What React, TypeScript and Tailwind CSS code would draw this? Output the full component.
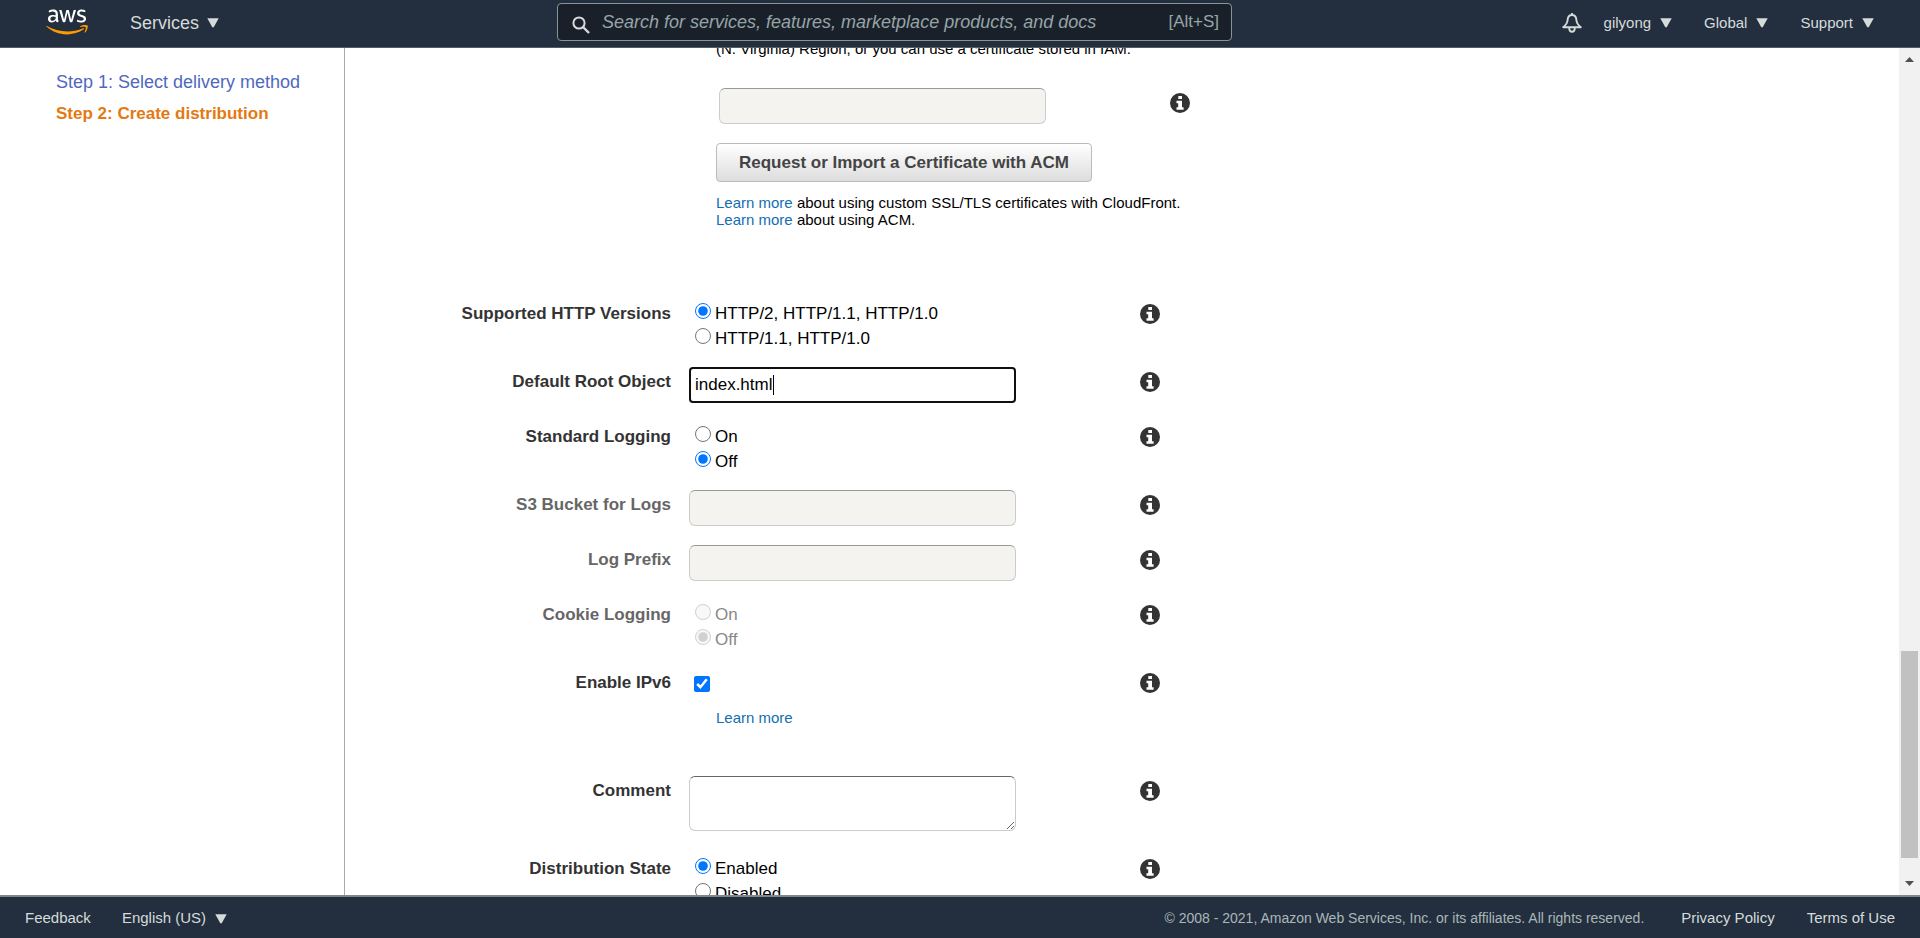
import React from 'react'

const Caret = () => (
    <svg width="12" height="10" viewBox="0 0 12 10" fill="currentColor" aria-hidden="true">
        <path d="M0.300 0.300h11.400L7 8.800q-1 1.300-2 0z" />
    </svg>
)

const AwsLogo = () => (
    <svg width="42" height="26" viewBox="0 0 304 182" aria-hidden="true">
        <path fill="#fff" d="M86.4 66.4c0 3.700.4 6.700 1.100 8.900.8 2.200 1.800 4.600 3.200 7.200.5.8.7 1.600.7 2.300 0 1-.6 2-1.900 3l-6.300 4.200c-.9.6-1.800.9-2.600.9-1 0-2-.5-3-1.400-1.400-1.500-2.600-3.100-3.600-4.700-1-1.700-2-3.600-3.100-5.900-7.800 9.200-17.600 13.800-29.400 13.800-8.400 0-15.100-2.400-20-7.200-4.900-4.800-7.400-11.200-7.400-19.200 0-8.500 3-15.400 9.100-20.600 6.100-5.200 14.200-7.800 24.500-7.800 3.400 0 6.900.3 10.600.8 3.700.5 7.500 1.300 11.500 2.200v-7.300c0-7.600-1.600-12.900-4.700-16-3.200-3.100-8.600-4.600-16.300-4.600-3.500 0-7.100.4-10.800 1.300-3.700.9-7.300 2-10.800 3.400-1.600.7-2.800 1.100-3.500 1.300-.7.2-1.200.3-1.600.3-1.400 0-2.100-1-2.100-3.100v-4.900c0-1.600.2-2.800.7-3.500.5-.7 1.400-1.400 2.800-2.100 3.500-1.800 7.700-3.300 12.600-4.500 4.900-1.300 10.100-1.900 15.600-1.900 11.900 0 20.600 2.700 26.200 8.100 5.500 5.400 8.300 13.600 8.300 24.600zM45.800 81.600c3.300 0 6.700-.6 10.300-1.800 3.600-1.200 6.800-3.400 9.500-6.400 1.600-1.900 2.800-4 3.400-6.400.6-2.400 1-5.300 1-8.700v-4.200c-2.900-.7-6-1.300-9.200-1.700-3.200-.4-6.300-.6-9.400-.6-6.700 0-11.600 1.300-14.900 4-3.300 2.700-4.900 6.500-4.900 11.500 0 4.700 1.200 8.200 3.700 10.600 2.400 2.500 5.900 3.700 10.500 3.700zM126.100 92.400c-1.800 0-3-.3-3.800-1-.8-.6-1.500-2-2.100-3.900L96.700 10.200c-.6-2-.9-3.300-.9-4 0-1.600.8-2.500 2.400-2.500h9.800c1.900 0 3.200.3 3.900 1 .8.6 1.400 2 2 3.900l16.800 66.200 15.600-66.200c.5-2 1.100-3.300 1.900-3.900.8-.6 2.200-1 4-1h8c1.900 0 3.200.3 4 1 .8.6 1.500 2 1.900 3.900l15.800 67 17.300-67c.6-2 1.300-3.300 2-3.900.8-.6 2.100-1 3.900-1h9.300c1.600 0 2.500.8 2.500 2.500 0 .5-.1 1-.2 1.600-.1.6-.3 1.400-.7 2.500l-24.100 77.300c-.6 2-1.300 3.300-2.100 3.900-.8.6-2.100 1-3.800 1h-8.600c-1.900 0-3.200-.3-4-1-.8-.7-1.500-2-1.900-4L156 23l-15.400 64.400c-.5 2-1.100 3.300-1.900 4-.8.7-2.200 1-4 1zM254.600 95.100c-5.200 0-10.400-.6-15.400-1.800-5-1.200-8.900-2.500-11.500-4-1.600-.9-2.700-1.900-3.100-2.800-.4-.9-.6-1.900-.6-2.800v-5.100c0-2.100.8-3.100 2.300-3.100.6 0 1.200.1 1.800.3.6.2 1.500.6 2.500 1 3.400 1.500 7.100 2.700 11 3.500 4 .8 7.900 1.200 11.900 1.200 6.300 0 11.200-1.100 14.600-3.300 3.400-2.200 5.200-5.400 5.200-9.500 0-2.800-.9-5.100-2.700-7-1.800-1.900-5.200-3.600-10.100-5.200L246 52c-7.300-2.300-12.700-5.700-16-10.200-3.300-4.400-5-9.300-5-14.500 0-4.200.9-7.900 2.700-11.100 1.800-3.200 4.200-6 7.200-8.200 3-2.300 6.400-4 10.400-5.200 4-1.200 8.200-1.700 12.600-1.700 2.200 0 4.500.1 6.700.4 2.300.3 4.400.7 6.500 1.100 2 .5 3.900 1 5.700 1.600 1.800.6 3.200 1.200 4.200 1.800 1.400.8 2.400 1.600 3 2.500.6.8.9 1.900.9 3.300v4.700c0 2.100-.8 3.200-2.300 3.200-.8 0-2.100-.4-3.800-1.200-5.700-2.600-12.100-3.900-19.200-3.900-5.700 0-10.200.9-13.300 2.800-3.100 1.900-4.700 4.800-4.700 8.900 0 2.800 1 5.200 3 7.100 2 1.900 5.700 3.800 11 5.500l14.200 4.500c7.200 2.300 12.400 5.500 15.500 9.600 3.100 4.100 4.600 8.800 4.600 14 0 4.300-.9 8.200-2.600 11.600-1.800 3.400-4.200 6.400-7.300 8.800-3.100 2.500-6.800 4.300-11.100 5.600-4.500 1.400-9.200 2.100-14.300 2.100z" />
        <path fill="#f90" d="M273.500 143.700c-32.900 24.300-80.700 37.200-121.800 37.200-57.600 0-109.500-21.300-148.700-56.700-3.100-2.800-.3-6.600 3.400-4.400 42.400 24.600 94.700 39.500 148.800 39.500 36.500 0 76.600-7.600 113.500-23.200 5.500-2.500 10.200 3.600 4.800 7.600zM287.200 128.100c-4.200-5.400-27.800-2.600-38.500-1.300-3.200.4-3.700-2.400-.8-4.500 18.800-13.200 49.700-9.400 53.300-5 3.600 4.500-1 35.400-18.600 50.200-2.700 2.300-5.300 1.100-4.100-1.900 4-9.900 12.900-32.200 8.700-37.500z" />
    </svg>
)

type InfoButtonProps = {
    topic: string;
}

const InfoButton = ({ topic }: InfoButtonProps) => (
    <button type="button" aria-label={`About ${topic}`} className="shrink-0">
        <svg width="20" height="20" viewBox="0 0 20 20" aria-hidden="true">
            <circle cx="10" cy="10" r="10" fill="#333" />
            <path fill="#fff" d="M8.300 3h3.700v3H8.300zM6.500 7.700H12v6.500h1.600v2.600H6.500v-2.600h1.700v-3.900H6.500z" />
        </svg>
    </button>
)

type RowProps = {
    label: string;
    htmlFor?: string;
    muted?: boolean;
    className?: string;
    children: React.ReactNode;
}

const Row = ({ label, htmlFor, muted, className, children }: RowProps) => {
    const labelClass = `w-[326px] shrink-0 pt-[5px] text-right text-[17px] leading-5 font-bold ${muted ? 'text-[#666]' : 'text-[#333]'}`

    return (
        <div className={`flex items-start ${className || 'mb-[19px]'}`}>
            {htmlFor
                ? <label htmlFor={htmlFor} className={labelClass}>{label}</label>
                : <span className={labelClass}>{label}</span>}
            <div className="ml-[18px] w-[451px] shrink-0">{children}</div>
            <div className="flex pt-[5px]">
                <InfoButton topic={label} />
            </div>
        </div>
    )
}

type RadioGroupProps = {
    name: string;
    options: string[];
    selected: string;
    disabled?: boolean;
}

const RadioGroup = ({ name, options, selected, disabled }: RadioGroupProps) => (
    <div role="radiogroup" aria-label={name} className="flex h-[49px] flex-col pl-1.5">
        {options.map((option) => (
            <label
                key={option}
                className={`flex h-[25px] shrink-0 items-start gap-1 pt-1 text-[17px] leading-[22px] ${disabled ? 'text-[#888]' : 'text-black'}`}
            >
                <input type="radio" name={name} defaultChecked={option === selected} disabled={disabled} className="size-4" />
                {option}
            </label>
        ))}
    </div>
)

const fieldClass = 'block w-[327px] rounded-md border border-[#ccc]'
const disabledFieldClass = `${fieldClass} h-9 border-t-[#999] bg-[#f4f3ef]`

const Header = () => (
    <header className="flex h-12 shrink-0 items-center border-b border-[#545b64] bg-[#232f3e] text-[15px] text-[#d5dbdb]">
        <div className="flex w-[557px] items-center pl-[46px]">
            <a href="#" aria-label="AWS home" className="pb-1"><AwsLogo /></a>
            <button type="button" className="ml-[42px] flex items-center gap-2 pb-0.5 text-lg leading-6">
                Services <Caret />
            </button>
        </div>
        <div className="mb-[3px] flex h-[38px] max-w-[675px] flex-1 items-center rounded-sm border border-[#879596] bg-[#1a202a] pr-3 pl-3.5 text-lg text-[#95a5a6]">
            <svg width="18" height="18" viewBox="0 0 18 18" fill="none" stroke="#d5dbdb" strokeWidth="2" className="mt-1.5" aria-hidden="true">
                <circle cx="7" cy="7" r="5.600" />
                <path d="M11 11l6 6" strokeWidth="2.400" />
            </svg>
            <input
                type="search"
                aria-label="Search"
                placeholder="Search for services, features, marketplace products, and docs"
                className="ml-3 min-w-0 flex-1 bg-transparent italic outline-none placeholder:text-[#95a5a6]"
            />
            <span className="text-[17px]">[Alt+S]</span>
        </div>
        <nav className="ml-auto flex items-center pr-[46px] pb-px">
            <button type="button" aria-label="Notifications" className="mr-[22px]">
                <svg width="20" height="20" viewBox="0 0 20 20" fill="none" stroke="currentColor" strokeWidth="1.900" strokeLinejoin="round" aria-hidden="true">
                    <path d="M10 0v2M10 2C7 2 5.800 4.200 5.600 7c-.2 3.200-1.600 5-4.400 7.200h17.600C16 12 14.600 10.200 14.400 7 14.200 4.200 13 2 10 2z" />
                    <path d="M7.200 14.800c0 2.600 1.200 4 2.800 4s2.800-1.400 2.800-4" />
                </svg>
            </button>
            <button type="button" className="mr-8 flex items-center gap-[9px]">gilyong <Caret /></button>
            <button type="button" className="mr-8 flex items-center gap-[9px]">Global <Caret /></button>
            <button type="button" className="flex items-center gap-[9px]">Support <Caret /></button>
        </nav>
    </header>
)

const Sidebar = () => (
    <nav className="w-[345px] shrink-0 border-r border-[#aaa] pt-[18px] pl-14 leading-8">
        <a href="#" className="block text-lg leading-8 text-[#4f68bf]">Step 1: Select delivery method</a>
        <a href="#" className="block text-[17px] font-bold text-[#e47911]">Step 2: Create distribution</a>
    </nav>
)

const CertificateSection = () => (
    <section className="-mt-2 mb-[71px] pl-[371px] text-[15px] leading-[17px]">
        <p>(N. Virginia) Region, or you can use a certificate stored in IAM.</p>
        <div className="mt-[31px] flex items-start pl-[3px]">
            <input type="text" disabled aria-label="Custom SSL certificate" className={disabledFieldClass} />
            <div className="ml-[124px] flex pt-[5px]">
                <InfoButton topic="Custom SSL certificate" />
            </div>
        </div>
        <button
            type="button"
            className="mt-[19px] mb-3 block h-[39px] rounded-[4px] border border-[#bbb] bg-linear-to-b from-white to-[#ddd] px-[22px] text-[17px] font-bold text-[#444]"
        >
            Request or Import a Certificate with ACM
        </button>
        <p><a href="#" className="text-[#146eb4]">Learn more</a> about using custom SSL/TLS certificates with CloudFront.</p>
        <p><a href="#" className="text-[#146eb4]">Learn more</a> about using ACM.</p>
    </section>
)

const Scrollbar = () => (
    <div className="flex w-[21px] shrink-0 flex-col items-center justify-between bg-[#f1f1f1] py-[9px] text-[#505050]" aria-hidden="true">
        <svg width="9" height="5" viewBox="0 0 9 5" fill="currentColor"><path d="M4.500 0L9 5H0z" /></svg>
        <div className="mt-auto mb-[23px] h-[207px] w-[17px] bg-[#c1c1c1]" />
        <svg width="9" height="5" viewBox="0 0 9 5" fill="currentColor"><path d="M0 0h9L4.500 5z" /></svg>
    </div>
)

const Footer = () => (
    <footer className="flex h-[43px] shrink-0 items-center border-t-2 border-[#80868c] bg-[#232f3e] px-[25px] pt-0.5 text-[15px] text-[#d5dbdb]">
        <a href="#">Feedback</a>
        <button type="button" className="ml-[31px] flex items-center gap-[9px]">English (US) <Caret /></button>
        <span className="ml-auto text-[14px] text-[#aab7b8]">© 2008 - 2021, Amazon Web Services, Inc. or its affiliates. All rights reserved.</span>
        <a href="#" className="ml-[37px]">Privacy Policy</a>
        <a href="#" className="ml-8">Terms of Use</a>
    </footer>
)

const App = () => (
    <div className="flex h-screen flex-col overflow-hidden bg-white font-['Liberation_Sans',Arial,sans-serif] text-black">
        <Header />
        <div className="flex min-h-0 flex-1">
            <Sidebar />
            <main className="min-w-0 flex-1 overflow-hidden">
                <CertificateSection />
                <Row label="Supported HTTP Versions">
                    <RadioGroup
                        name="Supported HTTP Versions"
                        options={['HTTP/2, HTTP/1.1, HTTP/1.0', 'HTTP/1.1, HTTP/1.0']}
                        selected="HTTP/2, HTTP/1.1, HTTP/1.0"
                    />
                </Row>
                <Row label="Default Root Object" htmlFor="root-object">
                    <div className="relative">
                        <input
                            id="root-object"
                            type="text"
                            defaultValue="index.html"
                            className="block h-9 w-[327px] rounded-[4px] border-2 border-[#101010] px-1 text-[17px] outline-none"
                        />
                        {/* text cursor */}
                        <span className="absolute top-2 left-[84px] h-5 w-px bg-black" />
                    </div>
                </Row>
                <Row label="Standard Logging">
                    <RadioGroup name="Standard Logging" options={['On', 'Off']} selected="Off" />
                </Row>
                <Row label="S3 Bucket for Logs" htmlFor="bucket" muted>
                    <input id="bucket" type="text" disabled className={disabledFieldClass} />
                </Row>
                <Row label="Log Prefix" htmlFor="prefix" muted>
                    <input id="prefix" type="text" disabled className={disabledFieldClass} />
                </Row>
                <Row label="Cookie Logging" muted>
                    <RadioGroup name="Cookie Logging" options={['On', 'Off']} selected="Off" disabled />
                </Row>
                <Row label="Enable IPv6" htmlFor="ipv6" className="mb-[50px]">
                    <input id="ipv6" type="checkbox" defaultChecked className="mt-2 ml-[5px] block size-4" />
                    <a href="#" className="mt-[17px] ml-[27px] block text-[15px] leading-[17px] text-[#146eb4]">Learn more</a>
                </Row>
                <Row label="Comment" htmlFor="comment" className="mb-[23px]">
                    <textarea id="comment" className={`${fieldClass} h-[55px] border-t-[#666]`} />
                </Row>
                <Row label="Distribution State">
                    <RadioGroup name="Distribution State" options={['Enabled', 'Disabled']} selected="Enabled" />
                </Row>
            </main>
            <Scrollbar />
        </div>
        <Footer />
    </div>
)

export default App
